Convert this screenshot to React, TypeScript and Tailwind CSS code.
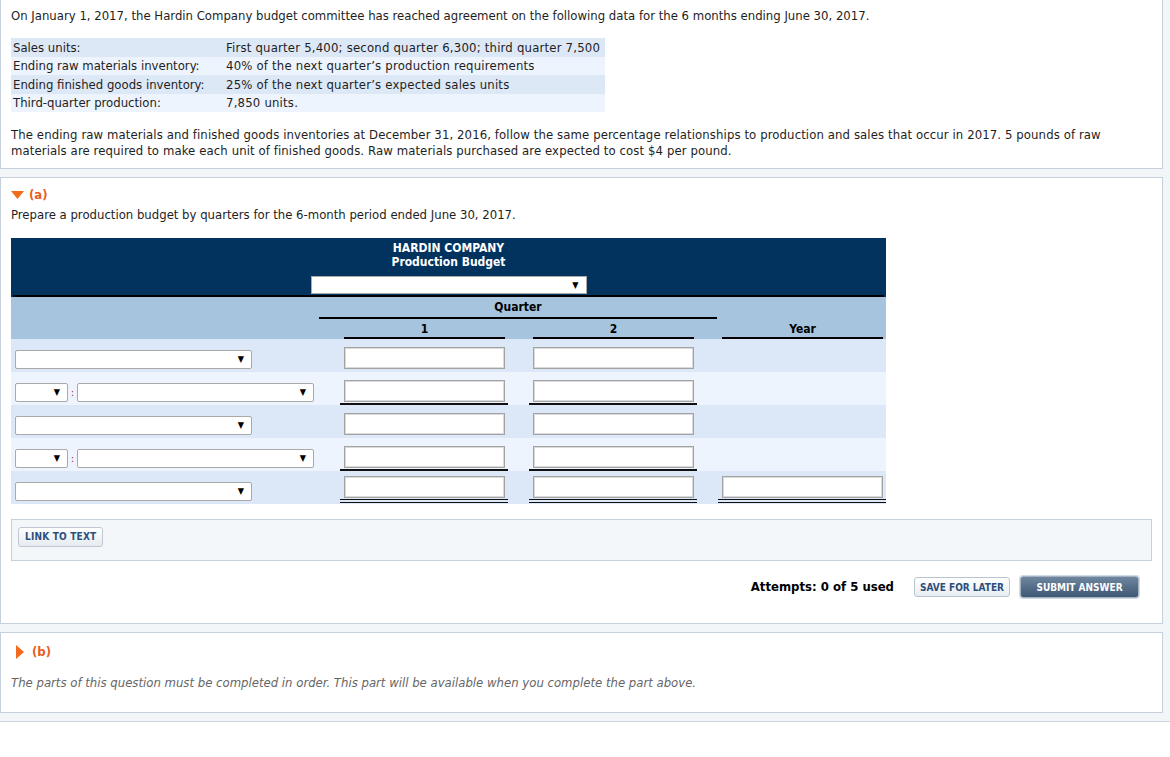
import React from 'react'

/* small building blocks */
function Arrow() {
    return <span className="text-[9px] leading-none text-black">▼</span>
}

function Select({ className }: { className: string }) {
    return (
        <div className={`h-[19px] bg-white border border-[#a9a9a9] rounded-[2px] flex items-center justify-end pr-[7px] ${className}`}>
            <Arrow />
        </div>
    )
}

function Input() {
    return <div className="h-[22px] w-[161px] ml-[4px] bg-white border border-[#a3a3a3] shadow-[inset_0_0_0_1px_#dadada]" />
}

type Line = 'none' | 'single' | 'double'

function Cell({ show, line, first }: { show: boolean; line: Line; first?: boolean }) {
    return (
        <div className={`w-[168px] h-full flex flex-col justify-end ${first ? '' : 'ml-[21px]'}`}>
            {show && <Input />}
            {line === 'none' && <div className="h-[3px]" />}
            {line === 'single' && <div className="mt-[1px] h-[2px] bg-[#111]" />}
            {line === 'double' && <div className="mt-[1px] h-[4px] mb-[1px] border-y border-[#111]" />}
        </div>
    )
}

const rows: { split: boolean; line: Line; year: boolean }[] = [
    { split: false, line: 'none', year: false },
    { split: true, line: 'single', year: false },
    { split: false, line: 'none', year: false },
    { split: true, line: 'single', year: false },
    { split: false, line: 'double', year: true },
]

const info = [
    ['Sales units:', 'First quarter 5,400; second quarter 6,300; third quarter 7,500'],
    ['Ending raw materials inventory:', '40% of the next quarter’s production requirements'],
    ['Ending finished goods inventory:', '25% of the next quarter’s expected sales units'],
    ['Third-quarter production:', '7,850 units.'],
]

export default function App() {
    return (
        <div className="min-h-screen bg-white text-[13px] text-[#1e1e1e] font-['DejaVu_Sans_Condensed','DejaVu_Sans',sans-serif]">
            <div className="bg-[#f3f6f9] pr-[7px] pb-[8px] border-b border-[#cdd6e0]">
                {/* question text */}
                <div className="bg-white border-x border-b border-[#c5d0dc] px-[10px] pt-[7px] pb-[9px]">
                    <p className="leading-[18px]">
                        On January 1, 2017, the Hardin Company budget committee has reached agreement on the following data for the 6 months ending June 30, 2017.
                    </p>
                    <div className="mt-[13px] w-[594px]">
                        {info.map(([k, v], i) => (
                            <div key={k} className={`flex h-[18.5px] items-center px-[2px] ${i % 2 === 0 ? 'bg-[#dde8f7]' : 'bg-[#edf4fd]'}`}>
                                <span className="w-[213px]">{k}</span>
                                <span className="tracking-[0.2px]">{v}</span>
                            </div>
                        ))}
                    </div>
                    <p className="mt-[15px] leading-[16px] pr-[50px] tracking-[0.1px]">
                        The ending raw materials and finished goods inventories at December 31, 2016, follow the same percentage relationships to production and sales that occur in 2017. 5 pounds of raw materials are required to make each unit of finished goods. Raw materials purchased are expected to cost $4 per pound.
                    </p>
                </div>

                {/* part (a) */}
                <div className="mt-[8px] bg-white border border-[#c5d0dc] px-[10px] pt-[8px] pb-[25px]">
                    <div className="flex items-center h-[18px] text-[#e8601c] font-bold">
                        <svg width="13" height="9" viewBox="0 0 13 9" className="mr-[5px]">
                            <polygon points="0,0 13,0 6.5,8" fill="#f26a1b" />
                        </svg>
                        <span>(a)</span>
                    </div>
                    <p className="mt-[2px] leading-[18px]">Prepare a production budget by quarters for the 6-month period ended June 30, 2017.</p>

                    <div className="mt-[14px] w-[875px]">
                        {/* dark heading */}
                        <div className="bg-[#02335f] h-[59px] flex flex-col items-center pt-[3px]">
                            <div className="text-white font-bold text-[12px] leading-[14px] text-center">
                                HARDIN COMPANY<br />Production Budget
                            </div>
                            <Select className="mt-[7px] w-[276px] h-[18px] rounded-none" />
                            <div className="mt-[1px] self-stretch mx-[2px] h-[2px] bg-black" />
                        </div>

                        {/* column heading */}
                        <div className="bg-[#a6c4de] h-[42px] font-bold text-[12px] text-black">
                            <div className="pl-[308px]">
                                <div className="w-[398px] text-center leading-[14px] pt-[3px] pb-[3px] border-b-2 border-black">Quarter</div>
                            </div>
                            <div className="flex pl-[2px]">
                                <div className="w-[327px]" />
                                {['1', '2', 'Year'].map((h, i) => (
                                    <div key={h} className={`w-[168px] ${i === 0 ? '' : 'ml-[21px]'}`}>
                                        <div className="ml-[4px] w-[161px] text-center leading-[14px] pt-[3px] pb-[1px] border-b-2 border-black">{h}</div>
                                    </div>
                                ))}
                            </div>
                        </div>

                        {/* rows */}
                        {rows.map((r, i) => (
                            <div key={i} className={`flex h-[33px] pl-[2px] ${i % 2 === 0 ? 'bg-[#dce8f7]' : 'bg-[#edf4fd]'}`}>
                                <div className="w-[327px] flex items-end pb-[3px] pl-[2px]">
                                    {r.split ? (
                                        <>
                                            <Select className="w-[53px]" />
                                            <span className="mx-[3px] text-[10px] text-[#b01515] leading-[19px]">:</span>
                                            <Select className="w-[237px]" />
                                        </>
                                    ) : (
                                        <Select className="w-[237px]" />
                                    )}
                                </div>
                                <Cell first show line={r.line} />
                                <Cell show line={r.line} />
                                <Cell show={r.year} line={r.year ? r.line : 'none'} />
                            </div>
                        ))}
                    </div>

                    <div className="mt-[15px] h-[42px] bg-[#f4f7fa] border border-[#c5d0dc] pl-[6px] pt-[6px]">
                        <button className="h-[20px] px-[6px] rounded-[3px] border border-[#bfc8d2] bg-linear-to-b from-white to-[#e6ebf0] text-[10px] font-bold text-[#2d4f7c] tracking-[0.2px]">
                            LINK TO TEXT
                        </button>
                    </div>

                    <div className="mt-[15px] flex items-center justify-end pr-[13px]">
                        <span className="font-bold text-[13px] text-black">Attempts: 0 of 5 used</span>
                        <button className="ml-[20px] h-[20px] w-[96px] rounded-[3px] border border-[#bac4cf] bg-linear-to-b from-white to-[#e8edf2] text-[10px] font-bold text-[#2d4f7c]">
                            SAVE FOR LATER
                        </button>
                        <button className="ml-[10px] h-[22px] w-[119px] rounded-[3px] border border-[#a3b3c4] bg-linear-to-b from-[#6f869e] to-[#3f5874] text-[10px] font-bold text-white shadow-[0_0_0_1px_#d3dbe3]">
                            SUBMIT ANSWER
                        </button>
                    </div>
                </div>

                {/* part (b) */}
                <div className="mt-[8px] bg-white border border-[#c5d0dc] px-[10px] pt-[10px] pb-[20px]">
                    <div className="flex items-center h-[18px] text-[#e8601c] font-bold pl-[5px]">
                        <svg width="8" height="14" viewBox="0 0 8 14" className="mr-[8px]">
                            <polygon points="0,0 8,7 0,14" fill="#f26a1b" />
                        </svg>
                        <span>(b)</span>
                    </div>
                    <p className="mt-[13px] leading-[18px] italic text-[#666]">
                        The parts of this question must be completed in order. This part will be available when you complete the part above.
                    </p>
                </div>
            </div>
        </div>
    )
}
